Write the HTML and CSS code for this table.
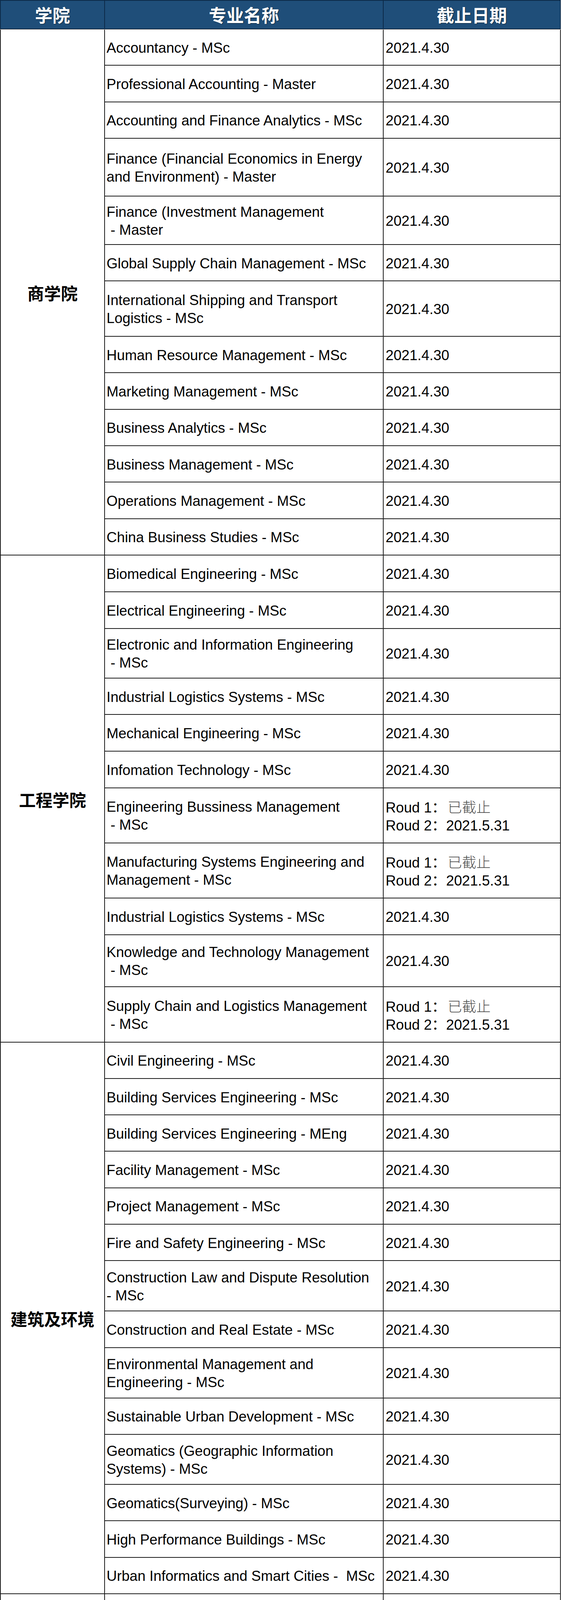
FILE: index.html
```html
<!DOCTYPE html>
<html lang="zh-CN">
<head>
<meta charset="utf-8">
<title>专业截止日期</title>
<link rel="stylesheet" href="styles.css">
</head>
<body>
<div class="page">
  <div class="sheet">
    <div class="head">
      <div class="hc">学院</div>
      <div class="hc">专业名称</div>
      <div class="hc">截止日期</div>
    </div>

    <section class="sec">
      <div class="school">商学院</div>
      <div class="rows">
        <div class="row"><div class="cell"><span>Accountancy - MSc</span></div><div class="cell date"><span>2021.4.30</span></div></div>
        <div class="row"><div class="cell"><span>Professional Accounting - Master</span></div><div class="cell date"><span>2021.4.30</span></div></div>
        <div class="row"><div class="cell"><span>Accounting and Finance Analytics - MSc</span></div><div class="cell date"><span>2021.4.30</span></div></div>
        <div class="row h148"><div class="cell"><span>Finance (Financial Economics in Energy<br>and Environment) - Master</span></div><div class="cell date"><span>2021.4.30</span></div></div>
        <div class="row h124"><div class="cell"><span>Finance (Investment Management<br>&nbsp;- Master</span></div><div class="cell date"><span>2021.4.30</span></div></div>
        <div class="row"><div class="cell"><span>Global Supply Chain Management - MSc</span></div><div class="cell date"><span>2021.4.30</span></div></div>
        <div class="row h142"><div class="cell"><span>International Shipping and Transport<br>Logistics - MSc</span></div><div class="cell date"><span>2021.4.30</span></div></div>
        <div class="row"><div class="cell"><span>Human Resource Management - MSc</span></div><div class="cell date"><span>2021.4.30</span></div></div>
        <div class="row"><div class="cell"><span>Marketing Management - MSc</span></div><div class="cell date"><span>2021.4.30</span></div></div>
        <div class="row"><div class="cell"><span>Business Analytics - MSc</span></div><div class="cell date"><span>2021.4.30</span></div></div>
        <div class="row"><div class="cell"><span>Business Management - MSc</span></div><div class="cell date"><span>2021.4.30</span></div></div>
        <div class="row"><div class="cell"><span>Operations Management - MSc</span></div><div class="cell date"><span>2021.4.30</span></div></div>
        <div class="row"><div class="cell"><span>China Business Studies - MSc</span></div><div class="cell date"><span>2021.4.30</span></div></div>
      </div>
    </section>

    <section class="sec">
      <div class="school">工程学院</div>
      <div class="rows">
        <div class="row r94"><div class="cell"><span>Biomedical Engineering - MSc</span></div><div class="cell date"><span>2021.4.30</span></div></div>
        <div class="row r94"><div class="cell"><span>Electrical Engineering - MSc</span></div><div class="cell date"><span>2021.4.30</span></div></div>
        <div class="row h127"><div class="cell"><span>Electronic and Information Engineering<br>&nbsp;- MSc</span></div><div class="cell date"><span>2021.4.30</span></div></div>
        <div class="row"><div class="cell"><span>Industrial Logistics Systems - MSc</span></div><div class="cell date"><span>2021.4.30</span></div></div>
        <div class="row"><div class="cell"><span>Mechanical Engineering - MSc</span></div><div class="cell date"><span>2021.4.30</span></div></div>
        <div class="row r94"><div class="cell"><span>Infomation Technology - MSc</span></div><div class="cell date"><span>2021.4.30</span></div></div>
        <div class="row h141"><div class="cell"><span>Engineering Bussiness Management<br>&nbsp;- MSc</span></div><div class="cell date"><span>Roud 1：<span class="closed">已截止</span><br>Roud 2：2021.5.31</span></div></div>
        <div class="row h141"><div class="cell"><span>Manufacturing Systems Engineering and<br>Management - MSc</span></div><div class="cell date"><span>Roud 1：<span class="closed">已截止</span><br>Roud 2：2021.5.31</span></div></div>
        <div class="row r94"><div class="cell"><span>Industrial Logistics Systems - MSc</span></div><div class="cell date"><span>2021.4.30</span></div></div>
        <div class="row h133"><div class="cell"><span>Knowledge and Technology Management<br>&nbsp;- MSc</span></div><div class="cell date"><span>2021.4.30</span></div></div>
        <div class="row h142"><div class="cell"><span>Supply Chain and Logistics Management<br>&nbsp;- MSc</span></div><div class="cell date"><span>Roud 1：<span class="closed">已截止</span><br>Roud 2：2021.5.31</span></div></div>
      </div>
    </section>

    <section class="sec">
      <div class="school">建筑及环境</div>
      <div class="rows">
        <div class="row"><div class="cell"><span>Civil Engineering - MSc</span></div><div class="cell date"><span>2021.4.30</span></div></div>
        <div class="row"><div class="cell"><span>Building Services Engineering - MSc</span></div><div class="cell date"><span>2021.4.30</span></div></div>
        <div class="row"><div class="cell"><span>Building Services Engineering - MEng</span></div><div class="cell date"><span>2021.4.30</span></div></div>
        <div class="row"><div class="cell"><span>Facility Management - MSc</span></div><div class="cell date"><span>2021.4.30</span></div></div>
        <div class="row"><div class="cell"><span>Project Management - MSc</span></div><div class="cell date"><span>2021.4.30</span></div></div>
        <div class="row"><div class="cell"><span>Fire and Safety Engineering - MSc</span></div><div class="cell date"><span>2021.4.30</span></div></div>
        <div class="row h129"><div class="cell"><span>Construction Law and Dispute Resolution<br>- MSc</span></div><div class="cell date"><span>2021.4.30</span></div></div>
        <div class="row"><div class="cell"><span>Construction and Real Estate - MSc</span></div><div class="cell date"><span>2021.4.30</span></div></div>
        <div class="row h129"><div class="cell"><span>Environmental Management and<br>Engineering - MSc</span></div><div class="cell date"><span>2021.4.30</span></div></div>
        <div class="row"><div class="cell"><span>Sustainable Urban Development - MSc</span></div><div class="cell date"><span>2021.4.30</span></div></div>
        <div class="row h128"><div class="cell"><span>Geomatics (Geographic Information<br>Systems) - MSc</span></div><div class="cell date"><span>2021.4.30</span></div></div>
        <div class="row"><div class="cell"><span>Geomatics(Surveying) - MSc</span></div><div class="cell date"><span>2021.4.30</span></div></div>
        <div class="row"><div class="cell"><span>High Performance Buildings - MSc</span></div><div class="cell date"><span>2021.4.30</span></div></div>
        <div class="row"><div class="cell"><span>Urban Informatics and Smart Cities -&nbsp; MSc</span></div><div class="cell date"><span>2021.4.30</span></div></div>
      </div>
    </section>

    <section class="sec">
      <div class="school"></div>
      <div class="rows">
        <div class="row h138"><div class="cell"><span>Applied Mathematics for Science and<br>Engineering - MSc</span></div><div class="cell date"><span>2021.4.30</span></div></div>
      </div>
    </section>
  </div>
</div>
</body>
</html>
```

FILE: styles.css
```css
html, body {
  margin: 0;
  padding: 0;
  background: #ffffff;
}

.page {
  width: 1440px;
  height: 4123px;
  overflow: hidden;
}

.sheet {
  width: 1437px;
  font-family: "Liberation Sans", Arial, "Noto Sans CJK SC", sans-serif;
  font-size: 36.7px;
  line-height: 46px;
  color: #000000;
}

.head {
  display: grid;
  grid-template-columns: 267px 714px 454px;
  height: 75px;
  box-sizing: border-box;
  background: #1f4e79;
  border-top: 2px solid #0d2a48;
  border-bottom: 2px solid #0d2a48;
  border-left: 2px solid #0d2a48;
  box-shadow: 0 1px 0 #d8cabc;
  position: relative;
}

.hc {
  box-sizing: border-box;
  border-right: 2px solid #0d2a48;
  display: flex;
  align-items: center;
  justify-content: center;
  color: #ffffff;
  font-family: "Noto Sans CJK SC", "Liberation Sans", sans-serif;
  font-weight: 700;
  font-size: 45px;
  line-height: 1;
  text-shadow: 1px 1px 2px rgba(0, 0, 0, 0.55);
}

.sec {
  display: flex;
  border-left: 2px solid #1c1c1c;
}

.school {
  width: 267px;
  flex: none;
  box-sizing: border-box;
  border-right: 2px solid #1c1c1c;
  border-bottom: 2px solid #1c1c1c;
  display: flex;
  align-items: center;
  justify-content: center;
  font-family: "Noto Sans CJK SC", "Liberation Sans", sans-serif;
  font-weight: 700;
  font-size: 43px;
  line-height: 1;
  padding-top: 4px;
}

.rows {
  width: 1168px;
  flex: none;
}

.row {
  display: grid;
  grid-template-columns: 714px 454px;
  height: 93.3px;
}

.r94 { height: 94px; }
.h124 { height: 124px; }
.h127 { height: 127px; }
.h128 { height: 128px; }
.h129 { height: 129px; }
.h133 { height: 133px; }
.h138 { height: 138px; }
.h141 { height: 141px; }
.h142 { height: 142px; }
.h148 { height: 148px; }

.cell {
  box-sizing: border-box;
  border-right: 2px solid #1c1c1c;
  border-bottom: 2px solid #1c1c1c;
  display: flex;
  align-items: center;
  padding: 4px 0 0 4px;
  white-space: nowrap;
  overflow: hidden;
}

.date {
  padding-left: 5px;
}

.closed {
  color: #4e4e4e;
  font-family: "Noto Sans CJK SC", sans-serif;
  font-weight: 300;
  padding-left: 4px;
}
```
